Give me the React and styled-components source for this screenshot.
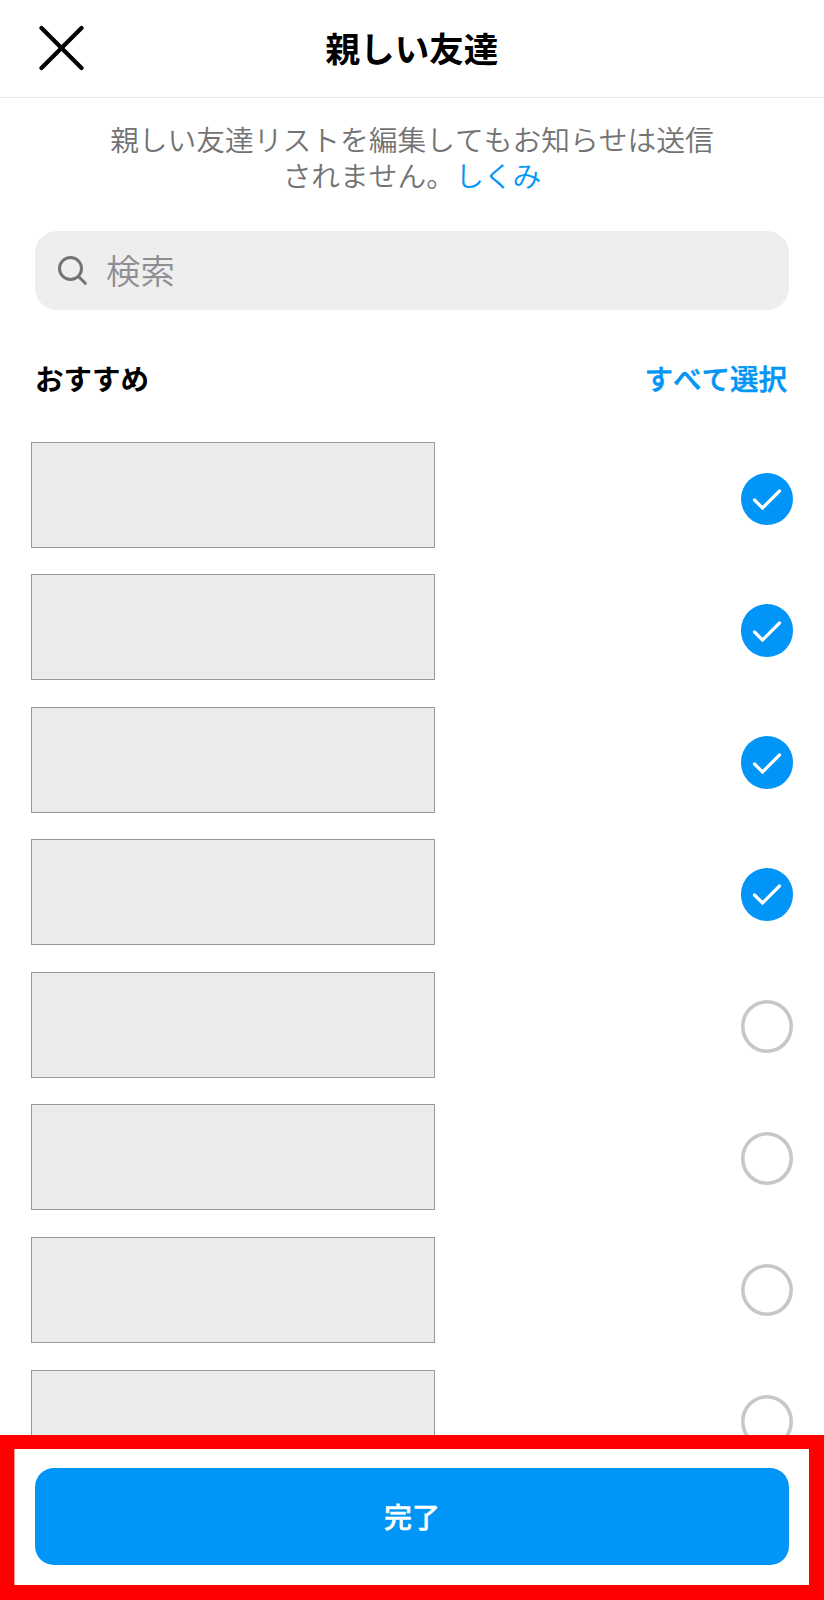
import React, { useState } from 'react'
import styled, { createGlobalStyle } from 'styled-components'

const GlobalStyle = createGlobalStyle`
    * {
        box-sizing: border-box;
    }
    body {
        margin: 0;
        background-color: white;
        font-family: 'Noto Sans CJK JP', sans-serif;
        font-kerning: none;
    }
`

const Container = styled.div`
    height: 1600px;
    width: 824px;
    display: flex;
    flex-direction: column;
    overflow: hidden;
    background-color: white;
    color: black;
`

const Header = styled.header`
    height: 98px;
    flex: none;
    display: grid;
    grid-template-columns: 84px 1fr 84px;
    align-items: start;
    border-bottom: 1px solid #e8e8e8;
`

const CloseButton = styled.button`
    display: flex;
    justify-content: flex-end;
    margin-top: 24.5px;
    padding: 0;
    border: none;
    background: none;
    cursor: pointer;
`

const Title = styled.h1`
    margin: 22px 0 0;
    font-size: 34.6px;
    line-height: 50px;
    font-weight: 600;
    text-align: center;
`

const Description = styled.p`
    margin: 23px 0 0;
    flex: none;
    font-size: 28.75px;
    line-height: 35.5px;
    font-weight: 350;
    text-align: center;
    color: #737373;
`

const Link = styled.a`
    color: #0095f6;
    cursor: pointer;
`

const SearchBox = styled.label`
    height: 79px;
    flex: none;
    margin: 39px 35px 0;
    padding-left: 22px;
    display: flex;
    align-items: center;
    gap: 18px;
    border-radius: 22px;
    background-color: #eeeeee;
`

const Input = styled.input`
    flex: 1;
    height: 50px;
    padding: 0 0 3px;
    border: none;
    outline: none;
    background: transparent;
    font-family: inherit;
    font-size: 34.4px;
    font-weight: 350;
    &::placeholder {
        color: #8e8e93;
        opacity: 1;
    }
`

const SectionHead = styled.div`
    height: 40px;
    flex: none;
    margin: 48px 37px 0 35px;
    display: flex;
    align-items: center;
    justify-content: space-between;
`

const SectionTitle = styled.h2`
    margin: 0;
    font-size: 28.5px;
    line-height: 40px;
    font-weight: 600;
`

const SelectAll = styled.button`
    padding: 0;
    border: none;
    background: none;
    color: #0095f6;
    font-family: inherit;
    font-size: 28.5px;
    line-height: 40px;
    font-weight: 500;
    font-kerning: none;
    -webkit-text-stroke: 0.5px #0095f6;
    cursor: pointer;
`

const Friends = styled.div`
    flex: 1;
    min-height: 0;
    padding: 43.5px 30.6px 0 31px;
    display: flex;
    justify-content: space-between;
    overflow: hidden;
`

const Column = styled.div`
    display: flex;
    flex-direction: column;
    gap: ${props => props.$gap}px;
    padding-top: ${props => props.$top}px;
`

const Friend = styled.div`
    width: 404px;
    height: 106px;
    flex: none;
    border: 1px solid #999999;
    background-color: #ebebeb;
`

const Check = styled.button`
    width: 52.8px;
    height: 52.8px;
    flex: none;
    padding: 0;
    display: flex;
    align-items: center;
    justify-content: center;
    border: none;
    border-radius: 50%;
    background-color: ${props => props.$on ? '#0095f6' : 'white'};
    box-shadow: ${props => props.$on ? 'none' : 'inset 0 0 0 3.6px #c7c7c7'};
    cursor: pointer;
`

const Footer = styled.footer`
    height: 166px;
    flex: none;
    padding: 19px 20px 19px 21px;
    border: solid red;
    border-width: 14px 15px 15px 14px;
    box-shadow: inset 0.4px 0 0 red;
    height: 165px;
`

const DoneButton = styled.button`
    width: 100%;
    height: 96.5px;
    padding: 0;
    border: none;
    border-radius: 19px;
    background-color: #0095f6;
    color: white;
    font-family: inherit;
    font-size: 28px;
    font-weight: 500;
    -webkit-text-stroke: 0.4px white;
    cursor: pointer;
`

const App = () => {
    const [checked, setChecked] = useState([true, true, true, true, false, false, false, false])

    const toggle = (index) => {
        setChecked(prev => prev.map((on, i) => i === index ? !on : on))
    }

    return (
        <>
            <GlobalStyle />
            <Container>
                <Header>
                    <CloseButton aria-label="閉じる">
                        <svg width="46" height="46" viewBox="0 0 46 46" stroke="black" strokeWidth="4.2" strokeLinecap="round">
                            <path d="M3.5 3L43.5 43M43.5 3L3.5 43" />
                        </svg>
                    </CloseButton>
                    <Title>親しい友達</Title>
                </Header>
                <Description>
                    親しい友達リストを編集してもお知らせは送信<br />
                    されません。<Link>しくみ</Link>
                </Description>
                <SearchBox>
                    <svg width="31" height="31" viewBox="0 0 31 31" fill="none" stroke="#737373" strokeWidth="3" strokeLinecap="round">
                        <circle cx="13.5" cy="13.5" r="11" />
                        <path d="M21.5 21.5L28.3 28.3" />
                    </svg>
                    <Input placeholder="検索" />
                </SearchBox>
                <SectionHead>
                    <SectionTitle>おすすめ</SectionTitle>
                    <SelectAll onClick={() => setChecked(prev => prev.map(() => true))}>すべて選択</SelectAll>
                </SectionHead>
                <Friends>
                    <Column $gap={26.6} $top={0}>
                        {checked.map((on, i) => <Friend key={i} />)}
                    </Column>
                    <Column $gap={79.05} $top={31}>
                        {checked.map((on, i) => (
                            <Check key={i} $on={on} onClick={() => toggle(i)}>
                                {on && (
                                    <svg width="30" height="24" viewBox="0 0 30 24" fill="none" stroke="white" strokeWidth="3.2" strokeLinecap="round">
                                        <path d="M2.5 13L10.5 21L27.5 4" />
                                    </svg>
                                )}
                            </Check>
                        ))}
                    </Column>
                </Friends>
                <Footer>
                    <DoneButton>完了</DoneButton>
                </Footer>
            </Container>
        </>
    )
}

export default App
